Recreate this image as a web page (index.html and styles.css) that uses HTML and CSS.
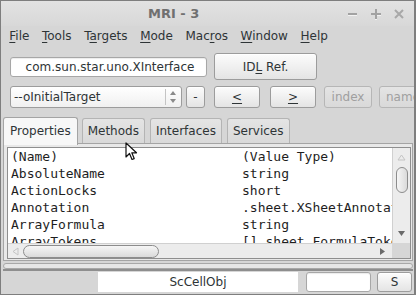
FILE: index.html
```html
<!DOCTYPE html>
<html lang="en">
<head>
    <meta charset="UTF-8">
    <title>MRI - 3</title>
    <link rel="stylesheet" href="styles.css">
</head>
<body>
    <div class="window">
        <div class="titlebar">
            <span class="title">MRI - 3</span>
            <div class="controls">
                <svg class="ctl" width="12" height="12" viewBox="0 0 12 12"><rect x="1" y="5" width="9" height="2" fill="#a2a2a2"/><rect x="1" y="7" width="9" height="1" fill="#f2f2f2"/></svg>
                <svg class="ctl" width="12" height="12" viewBox="0 0 12 12"><rect x="1" y="5" width="10" height="2" fill="#a2a2a2"/><rect x="5" y="1" width="2" height="10" fill="#a2a2a2"/><rect x="7" y="7" width="4" height="1" fill="#f2f2f2"/><rect x="5" y="11" width="2" height="1" fill="#f2f2f2"/></svg>
                <svg class="ctl" width="12" height="12" viewBox="0 0 12 12"><path d="M2 2 L10 10 M10 2 L2 10" stroke="#a8a8a8" stroke-width="2"/></svg>
            </div>
        </div>

        <div class="menubar">
            <span class="menu"><u>F</u>ile</span>
            <span class="menu"><u>T</u>ools</span>
            <span class="menu">T<u>a</u>rgets</span>
            <span class="menu"><u>M</u>ode</span>
            <span class="menu">Mac<u>r</u>os</span>
            <span class="menu"><u>W</u>indow</span>
            <span class="menu"><u>H</u>elp</span>
        </div>

        <div class="row row-top">
            <div class="field field-type">com.sun.star.uno.XInterface</div>
            <button class="btn btn-idl">ID<u>L</u> Ref.</button>
        </div>

        <div class="row row-nav">
            <div class="combo">
                <span class="combo-text">--oInitialTarget</span>
                <span class="spin">
                    <svg width="8" height="14" viewBox="0 0 8 14"><path d="M1 5 L4 1 L7 5 Z" fill="#8a8a8a"/><path d="M1 9 L4 13 L7 9 Z" fill="#8a8a8a"/></svg>
                </span>
            </div>
            <button class="btn btn-minus">-</button>
            <button class="btn btn-nav btn-back"><u>&lt;</u></button>
            <button class="btn btn-nav btn-fwd"><u>&gt;</u></button>
            <button class="btn btn-off btn-index">index</button>
            <button class="btn btn-off btn-name">name</button>
        </div>

        <div class="tabs">
            <span class="tab active">Properties</span>
            <span class="tab">Methods</span>
            <span class="tab">Interfaces</span>
            <span class="tab">Services</span>
        </div>

        <div class="pane">
            <div class="listbox">
                <div class="list">
                    <span>(Name)</span><span>(Value Type)</span>
                    <span>AbsoluteName</span><span>string</span>
                    <span>ActionLocks</span><span>short</span>
                    <span>Annotation</span><span>.sheet.XSheetAnnotationAnchor</span>
                    <span>ArrayFormula</span><span>string</span>
                    <span>ArrayTokens</span><span>[].sheet.FormulaToken</span>
                </div>
                <div class="vscroll">
                    <svg class="arrow-up" width="9" height="7" viewBox="0 0 9 7"><path d="M1 6 L4.5 1 L8 6 Z" fill="none" stroke="#c4c4c4"/></svg>
                    <div class="vthumb"></div>
                    <svg class="arrow-down" width="9" height="7" viewBox="0 0 9 7"><path d="M1 1 L8 1 L4.5 6 Z" fill="#6a6a6a"/></svg>
                </div>
                <div class="hscroll">
                    <svg class="arrow-left" width="7" height="9" viewBox="0 0 7 9"><path d="M6 1 L1 4.5 L6 8 Z" fill="none" stroke="#c4c4c4"/></svg>
                    <div class="hthumb"></div>
                    <svg class="arrow-right" width="7" height="9" viewBox="0 0 7 9"><path d="M1 1 L6 4.5 L1 8 Z" fill="#6a6a6a"/></svg>
                </div>
                <div class="corner"></div>
            </div>
        </div>

        <div class="splitter"></div>
        <div class="rule"></div>

        <div class="status">
            <div class="status-label">ScCellObj</div>
            <div class="field status-field"></div>
            <button class="btn btn-s">S</button>
        </div>

        <svg class="cursor" width="14" height="20" viewBox="0 0 14 20"><path d="M1 1 L1 15 L4.5 11.5 L7 17.5 L9.2 16.6 L6.8 10.8 L11.5 10.8 Z" fill="#fff" stroke="#111" stroke-width="1.2" stroke-linejoin="round"/></svg>
    </div>
</body>
</html>
```

FILE: styles.css
```css
* {
    margin: 0;
    padding: 0;
    box-sizing: border-box;
}

body {
    font-family: "DejaVu Sans", "Liberation Sans", sans-serif;
    font-size: 12px;
    color: #2e3436;
    background: #8a8a8a;
}

.window {
    position: relative;
    width: 416px;
    height: 295px;
    background: #d6d6d6;
    border: 1px solid #7e7e7e;
    border-right-width: 2px;
    overflow: hidden;
}

.titlebar {
    height: 25px;
    display: flex;
    align-items: center;
    background: linear-gradient(#e2e2e2, #d8d8d8);
}

.title {
    margin-left: 147px;
    font-size: 13px;
    font-weight: bold;
    color: #707070;
}

.controls {
    margin-left: auto;
    margin-right: 9px;
    display: flex;
    gap: 11px;
}

.ctl {
    display: block;
}

.menubar {
    height: 21px;
    display: flex;
    align-items: center;
    padding-left: 2px;
}

.menu {
    padding: 0 6.3px;
    line-height: 21px;
}

.menu u {
    text-underline-offset: 2px;
}

.row {
    display: flex;
    align-items: center;
    margin-top: 6px;
    padding-left: 9px;
    white-space: nowrap;
    overflow: hidden;
}

.row > * {
    flex-shrink: 0;
}

.row-top {
    height: 27px;
}

.row-nav {
    height: 22px;
}

.field {
    background: #fff;
    border: 1px solid #a7a7a7;
    border-radius: 3px;
    box-shadow: inset 0 1px 1px rgba(0, 0, 0, 0.08);
}

.field-type {
    width: 197px;
    height: 20px;
    line-height: 18px;
    text-align: center;
    padding-left: 3px;
}

.btn {
    font-family: inherit;
    font-size: 12px;
    color: #2e3436;
    background: linear-gradient(#fcfcfc, #e4e4e4);
    border: 1px solid #9c9c9c;
    border-radius: 3px;
    box-shadow: inset 0 1px #fff;
}

.btn u {
    text-underline-offset: 2px;
}

.btn-idl {
    width: 103px;
    height: 27px;
    margin-left: 7px;
}

.combo {
    width: 172px;
    height: 22px;
    display: flex;
    align-items: center;
    background: linear-gradient(#ffffff, #f0f0f0);
    border: 1px solid #9c9c9c;
    border-radius: 3px;
}

.combo-text {
    padding-left: 3px;
    flex: 1;
}

.spin {
    height: 16px;
    width: 12px;
    border-left: 1px solid #c4c4c4;
    display: flex;
    align-items: center;
    justify-content: flex-end;
    margin-right: 4px;
}

.spin svg {
    display: block;
}

.btn-minus {
    width: 19px;
    height: 22px;
    margin-left: 4px;
}

.btn-nav {
    width: 46px;
    height: 22px;
}

.btn-back {
    margin-left: 9px;
}

.btn-fwd {
    margin-left: 10px;
}

.btn-off {
    height: 22px;
    color: #9f9f9f;
    background: linear-gradient(#e4e4e4, #d9d9d9);
    border-color: #b6b6b6;
    box-shadow: none;
}

.btn-index {
    width: 48px;
    margin-left: 8px;
}

.btn-name {
    width: 50px;
    margin-left: 7px;
    text-align: left;
    padding-left: 6px;
}

.tabs {
    height: 26px;
    margin-top: 9px;
    display: flex;
    align-items: flex-end;
    gap: 5px;
    padding-left: 2px;
    position: relative;
    z-index: 1;
}

.tab {
    height: 25px;
    padding: 0 5px;
    line-height: 24px;
    background: linear-gradient(#e4e4e4, #d9d9d9);
    border: 1px solid #b4b4b4;
    border-bottom: none;
    border-radius: 3px 3px 0 0;
}

.tab.active {
    height: 28px;
    margin-bottom: -2px;
    margin-right: -1px;
    padding: 0 6px 2px;
    line-height: 26px;
    background: #f7f7f7;
    border-color: #a4a4a4;
}

.pane {
    height: 118px;
    margin-left: 2px;
    width: 410px;
    border: 1px solid #a4a4a4;
    background: #e8e8e8;
    padding: 3px 1px 1px 3px;
}

.listbox {
    height: 112px;
    border: 1px solid #8e8e8e;
    display: grid;
    grid-template-columns: 1fr 18px;
    grid-template-rows: 95px 15px;
    background: #fff;
}

.list {
    display: grid;
    grid-template-columns: 231px 1fr;
    grid-auto-rows: 17px;
    padding-left: 3px;
    overflow: hidden;
    font-family: "DejaVu Sans Mono", "Liberation Mono", monospace;
    font-size: 13px;
    line-height: 17px;
    color: #1e1e1e;
    white-space: nowrap;
}

.list span {
    overflow: hidden;
}

.vscroll {
    background: #ececec;
    border-left: 1px solid #d0d0d0;
    display: flex;
    flex-direction: column;
    align-items: center;
}

.arrow-up {
    margin-top: 6px;
}

.vthumb {
    width: 12px;
    height: 26px;
    margin-top: 6px;
    border: 1px solid #8c8c8c;
    border-radius: 6px;
    background: linear-gradient(90deg, #f6f6f6, #dadada);
}

.arrow-down {
    margin-top: auto;
    margin-bottom: 6px;
}

.hscroll {
    background: #ececec;
    border-top: 1px solid #d0d0d0;
    display: flex;
    align-items: center;
    padding-left: 4px;
}

.hthumb {
    width: 136px;
    height: 13px;
    margin-left: 4px;
    border: 1px solid #8c8c8c;
    border-radius: 7px;
    background: linear-gradient(#f6f6f6, #dadada);
}

.arrow-right {
    margin-left: auto;
    margin-right: 6px;
}

.corner {
    background: #d6d6d6;
}

.splitter {
    height: 6px;
    margin: 2px 0 0 2px;
    width: 410px;
    border: 1px solid #a8a8a8;
    border-radius: 3px;
    background: #e6e6e6;
}

.rule {
    height: 3px;
    margin-left: 2px;
    width: 410px;
    border-top: 2px solid #8e8e8e;
}

.status {
    height: 20px;
    display: flex;
    align-items: stretch;
}

.status-label {
    width: 200px;
    margin-left: 97px;
    background: #fff;
    text-align: center;
    line-height: 20px;
}

.status-field {
    width: 65px;
    margin-left: 8px;
}

.btn-s {
    width: 35px;
    margin-left: 6px;
}

.cursor {
    position: absolute;
    left: 124px;
    top: 141px;
    z-index: 2;
}
```
